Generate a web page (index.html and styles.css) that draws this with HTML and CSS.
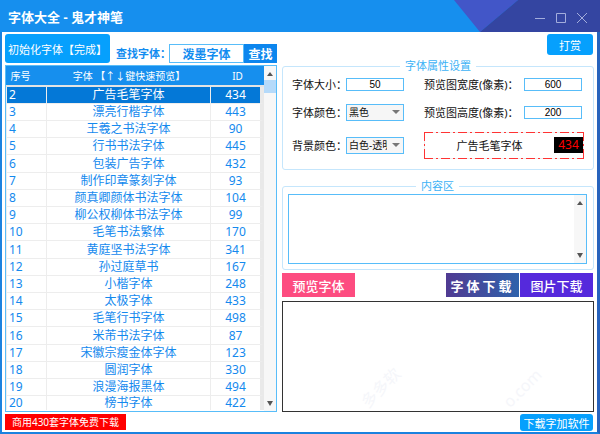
FILE: index.html
```html
<!DOCTYPE html>
<html lang="zh-CN">
<head>
    <meta charset="UTF-8">
    <meta name="viewport" content="width=device-width, initial-scale=1.0">
    <title>字体大全 - 鬼才神笔</title>
    <link rel="stylesheet" href="styles.css">
</head>
<body>
    <div class="window">
        <header class="titlebar">
            <h1>字体大全 - 鬼才神笔</h1>
            <svg class="title-art" viewBox="0 0 146 32" preserveAspectRatio="none">
                <path d="M0 0H64L26 32Z" fill="#4256c8"/>
                <path d="M64 0H146V32H26Z" fill="#3445a1"/>
            </svg>
            <div class="window-buttons">
                <button aria-label="最小化"><svg viewBox="0 0 12 12"><path d="M1 6.5h10"/></svg></button>
                <button aria-label="最大化"><svg viewBox="0 0 12 12"><path d="M1.5 1.5h9v9h-9z"/></svg></button>
                <button aria-label="关闭"><svg viewBox="0 0 12 12"><path d="M1 1l10 10M11 1L1 11"/></svg></button>
            </div>
        </header>

        <main class="content">
            <section class="left">
                <div class="toolbar">
                    <button class="btn init-btn">初始化字体【完成】</button>
                    <label class="search-label" for="search">查找字体：</label>
                    <input class="search-input" id="search" type="text" value="泼墨字体">
                    <button class="search-btn">查找</button>
                </div>
                <div class="font-list">
                    <div class="table-wrap">
                        <table class="font-table">
                            <thead>
                                <tr><th class="col-no">序号</th><th>字体 【↑↓键快速预览】</th><th class="col-id">ID</th></tr>
                            </thead>
                            <tbody>
                                <tr class="selected"><td>2</td><td>广告毛笔字体</td><td>434</td></tr>
                                <tr><td>3</td><td>漂亮行楷字体</td><td>443</td></tr>
                                <tr><td>4</td><td>王羲之书法字体</td><td>90</td></tr>
                                <tr><td>5</td><td>行书书法字体</td><td>445</td></tr>
                                <tr><td>6</td><td>包装广告字体</td><td>432</td></tr>
                                <tr><td>7</td><td>制作印章篆刻字体</td><td>93</td></tr>
                                <tr><td>8</td><td>颜真卿颜体书法字体</td><td>104</td></tr>
                                <tr><td>9</td><td>柳公权柳体书法字体</td><td>99</td></tr>
                                <tr><td>10</td><td>毛笔书法繁体</td><td>170</td></tr>
                                <tr><td>11</td><td>黄庭坚书法字体</td><td>341</td></tr>
                                <tr><td>12</td><td>孙过庭草书</td><td>167</td></tr>
                                <tr><td>13</td><td>小楷字体</td><td>248</td></tr>
                                <tr><td>14</td><td>太极字体</td><td>433</td></tr>
                                <tr><td>15</td><td>毛笔行书字体</td><td>498</td></tr>
                                <tr><td>16</td><td>米芾书法字体</td><td>87</td></tr>
                                <tr><td>17</td><td>宋徽宗瘦金体字体</td><td>123</td></tr>
                                <tr><td>18</td><td>圆润字体</td><td>330</td></tr>
                                <tr><td>19</td><td>浪漫海报黑体</td><td>494</td></tr>
                                <tr><td>20</td><td>榜书字体</td><td>422</td></tr>
                            </tbody>
                        </table>
                    </div>
                    <div class="scrollbar">
                        <svg viewBox="0 0 8 5"><path d="M1 5L4 1L7 5Z"/></svg>
                        <span class="thumb"></span>
                        <svg viewBox="0 0 8 5"><path d="M1 0L4 5L7 0Z"/></svg>
                    </div>
                </div>
            </section>

            <section class="right">
                <button class="btn reward-btn">打赏</button>

                <fieldset class="group settings">
                    <legend>字体属性设置</legend>
                    <div class="settings-grid">
                        <label for="size">字体大小：</label>
                        <input id="size" type="text" value="50">
                        <label class="second" for="width">预览图宽度(像素)：</label>
                        <input id="width" type="text" value="600">

                        <label for="color">字体颜色：</label>
                        <div class="select">
                            <select id="color"><option>黑色</option></select>
                            <svg viewBox="0 0 8 5"><path d="M0 0h8L4 4Z"/></svg>
                        </div>
                        <label class="second" for="height">预览图高度(像素)：</label>
                        <input id="height" type="text" value="200">

                        <label for="bg">背景颜色：</label>
                        <div class="select">
                            <select id="bg"><option>白色-透明</option></select>
                            <svg viewBox="0 0 8 5"><path d="M0 0h8L4 4Z"/></svg>
                        </div>
                        <div class="current-font">
                            <span class="current-name">广告毛笔字体</span>
                            <span class="current-id">434</span>
                        </div>
                    </div>
                </fieldset>

                <fieldset class="group text-group">
                    <legend>内容区</legend>
                    <div class="text-box">
                        <textarea aria-label="内容区"></textarea>
                        <div class="scrollbar">
                            <svg viewBox="0 0 8 5"><path d="M1 5L4 1L7 5Z"/></svg>
                            <svg viewBox="0 0 8 5"><path d="M1 0L4 5L7 0Z"/></svg>
                        </div>
                    </div>
                </fieldset>

                <div class="actions">
                    <button class="preview-btn">预览字体</button>
                    <button class="font-btn">字体下载</button>
                    <button class="image-btn">图片下载</button>
                </div>

                <div class="preview">
                    <span class="watermark">多多软</span>
                    <span class="watermark">o.com</span>
                </div>
            </section>
        </main>

        <footer class="footer">
            <a class="free-link" href="#">商用430套字体免费下载</a>
            <button class="btn app-btn">下载字加软件</button>
        </footer>
    </div>
</body>
</html>
```

FILE: styles.css
```css
* {
    box-sizing: border-box;
}
body {
    margin: 0;
    font-family: "Noto Sans", "Noto Sans CJK SC", sans-serif;
    font-size: 11px;
    color: #111;
}
button, input, select, textarea {
    font-family: inherit;
    font-size: inherit;
    margin: 0;
    padding: 0;
}
button {
    border: none;
    color: #fff;
    white-space: nowrap;
    cursor: pointer;
}
.window {
    display: flex;
    flex-direction: column;
    height: 100vh;
    background: #fff;
    border: 2px solid #1b82df;
    border-top: none;
    border-right: 3px solid #2763bd;
}

/* title bar */
.titlebar {
    display: flex;
    align-items: center;
    position: relative;
    flex: none;
    height: 32px;
    margin: 0 -3px 0 -2px;
    padding: 0 12px 0 8px;
    background: #168fee;
}
.titlebar h1 {
    margin: 0;
    font-size: 13px;
    font-weight: bold;
    color: #fff;
}
.title-art {
    position: absolute;
    top: 0;
    right: 0;
    width: 146px;
    height: 100%;
}
.window-buttons {
    display: flex;
    gap: 9px;
    position: relative;
    margin-left: auto;
    padding-top: 4px;
}
.window-buttons button {
    width: 12px;
    height: 12px;
    background: none;
}
.window-buttons svg {
    display: block;
    width: 12px;
    height: 12px;
    fill: none;
    stroke: #a3addc;
}

/* layout */
.content {
    display: grid;
    grid-template-columns: 272px 1fr;
    gap: 5px;
    flex: 1;
    min-height: 0;
    padding: 2px 3px 0;
}
.left, .right {
    display: flex;
    flex-direction: column;
    min-width: 0;
    min-height: 0;
}
.btn {
    background: #06a0fd;
    border-radius: 3px;
}

/* font list */
.toolbar {
    display: flex;
    align-items: flex-end;
    margin-bottom: 2px;
}
.init-btn {
    flex: none;
    width: 105px;
    height: 29px;
}
.search-label {
    flex: 1;
    min-width: 0;
    padding-left: 6px;
    line-height: 19px;
    font-weight: bold;
    color: #128cf0;
    white-space: nowrap;
}
.search-input {
    flex: none;
    width: 75px;
    height: 19px;
    border: 1px solid #58bdf9;
    text-align: center;
    font-size: 12px;
    font-weight: bold;
    color: #128cf0;
}
.search-btn {
    flex: none;
    width: 33px;
    height: 19px;
    background: #0c86ee;
    font-size: 12px;
    font-weight: bold;
}
.font-list {
    display: flex;
    flex: 1;
    min-height: 0;
    border: 1px solid #58bdf9;
}
.table-wrap {
    flex: 1;
    overflow: hidden;
}
.font-table {
    width: 100%;
    border-spacing: 0;
    table-layout: fixed;
    color: #1489ee;
}
.font-table th {
    height: 21px;
    padding: 0;
    background: #168fee;
    border-bottom: 2px solid #e4e4e4;
    color: #fff;
    font-size: 10px;
    font-weight: normal;
    line-height: 16px;
}
.font-table .col-no {
    width: 41px;
    padding-right: 12px;
}
.font-table .col-id {
    width: 53px;
}
.font-table td {
    height: 17px;
    padding: 0;
    border-right: 1px solid #ededed;
    border-bottom: 1px solid #ededed;
    text-align: center;
    font-size: 12px;
    line-height: 16px;
}
.font-table tr:nth-child(5n) td {
    height: 18px;
}
.font-table tr:last-child td {
    height: 14px;
    border-bottom: none;
    line-height: 14px;
}
.font-table td:first-child {
    border-left: 1px solid #ededed;
    padding-left: 2px;
    text-align: left;
}
.font-table td:last-child {
    border-right: 4px solid #e9e9e9;
}
.font-table .selected td {
    background: #0478d7;
    background-clip: padding-box;
    color: #fff;
}
.scrollbar {
    display: flex;
    flex-direction: column;
    justify-content: space-between;
    align-items: center;
    width: 12px;
    padding: 5px 0;
    background: #f7f7f7;
}
.scrollbar svg {
    width: 8px;
    height: 5px;
    fill: #555;
}
.scrollbar .thumb {
    width: 12px;
    height: 13px;
    margin: 4px 0 auto;
    background: #b5dafa;
}

/* settings */
.reward-btn {
    align-self: flex-end;
    flex: none;
    width: 46px;
    height: 21px;
    margin-right: 1px;
}
.group {
    flex: none;
    min-width: 0;
    margin: 0;
    padding: 0 6px;
    border: 1px solid #c5e6fc;
    border-radius: 3px;
}
.group legend {
    margin: 0 auto;
    padding: 0 5px;
    color: #3db2f6;
    line-height: 16px;
}
.settings {
    margin-top: 3px;
    padding-bottom: 9px;
}
.settings-grid {
    display: grid;
    grid-template-columns: 54px 58px 1fr 58px;
    grid-template-rows: 20px 36px 30px;
    align-items: center;
    padding: 0 5px 0 3px;
}
.settings-grid label {
    white-space: nowrap;
}
.settings-grid .second {
    padding-left: 20px;
}
.settings-grid input {
    width: 100%;
    height: 13px;
    border: 1px solid #58bdf9;
    text-align: center;
    font-family: "Liberation Sans", sans-serif;
    font-size: 10px;
}
.select {
    position: relative;
    height: 17px;
}
.select select {
    appearance: none;
    display: block;
    width: 100%;
    height: 100%;
    padding: 0 16px 0 2px;
    border: 1px solid #58bdf9;
    border-radius: 0;
    background: #f6f6f6;
    color: #111;
    font-size: 10px;
    overflow: hidden;
}
.select svg {
    position: absolute;
    top: 6px;
    right: 4px;
    width: 8px;
    height: 5px;
    fill: #777;
    pointer-events: none;
}
.current-font {
    display: flex;
    align-items: center;
    grid-column: 3 / 5;
    height: 27px;
    margin: 0 -2px 0 20px;
    padding: 2px 1px;
    /* dash-dot frame, one gradient per side */
    background:
        repeating-linear-gradient(90deg, #f33 0 9px, #eee 9px 12px, #f33 12px 14px, #eee 14px 17px) top / 100% 1px no-repeat,
        repeating-linear-gradient(90deg, #f33 0 9px, #eee 9px 12px, #f33 12px 14px, #eee 14px 17px) bottom / 100% 1px no-repeat,
        repeating-linear-gradient(#f33 0 9px, #eee 9px 12px, #f33 12px 14px, #eee 14px 17px) left / 1px 100% no-repeat,
        repeating-linear-gradient(#f33 0 9px, #eee 9px 12px, #f33 12px 14px, #eee 14px 17px) right / 1px 100% no-repeat;
}
.current-name {
    flex: 1;
    text-align: center;
}
.current-id {
    width: 29px;
    background: #000;
    color: #f00;
    text-align: center;
    font-size: 12px;
    line-height: 16px;
}

/* text area */
.text-group {
    margin-top: 8px;
    padding: 0 6px 5px 5px;
}
.text-box {
    display: flex;
    height: 70px;
    border: 1px solid #58bdf9;
}
.text-box textarea {
    flex: 1;
    min-width: 0;
    border: none;
    outline: none;
    resize: none;
    overflow: hidden;
}

.actions {
    display: flex;
    flex: none;
    gap: 1px;
    margin: 3px 1px 4px 0;
}
.actions button {
    width: 73px;
    height: 24px;
    font-size: 13px;
    font-weight: 500;
}
.actions .preview-btn {
    margin-right: auto;
    background: #fd4c80;
}
.actions .font-btn {
    background: linear-gradient(90deg, #503a92, #2f62ab);
    font-weight: bold;
    letter-spacing: 3px;
}
.actions .image-btn {
    background: #5529dc;
}
.preview {
    display: flex;
    justify-content: space-around;
    align-items: flex-end;
    flex: 1;
    padding: 0 0 12px 26px;
    border: 1px solid #333;
}
.watermark {
    color: #f5f6fa;
    font-size: 16px;
    transform: rotate(-45deg);
}

.footer {
    display: flex;
    justify-content: space-between;
    align-items: flex-start;
    flex: none;
    padding: 2px 4px 1px 3px;
}
.free-link {
    width: 121px;
    background: #f00;
    color: #fff;
    font-size: 10px;
    line-height: 16px;
    text-align: center;
    text-decoration: none;
}
.app-btn {
    width: 73px;
    height: 17px;
}
```
